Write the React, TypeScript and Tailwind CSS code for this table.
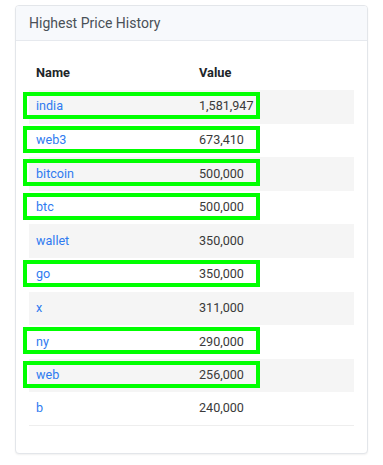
const rows = [
  { name: "india", value: "1,581,947", mark: true },
  { name: "web3", value: "673,410", mark: true },
  { name: "bitcoin", value: "500,000", mark: true },
  { name: "btc", value: "500,000", mark: true },
  { name: "wallet", value: "350,000", mark: false },
  { name: "go", value: "350,000", mark: true },
  { name: "x", value: "311,000", mark: false },
  { name: "ny", value: "290,000", mark: true },
  { name: "web", value: "256,000", mark: true },
  { name: "b", value: "240,000", mark: false },
];

export default function App() {
  return (
    <div className="w-[383px] h-[465px] bg-white pt-[5px] px-[15px]" style={{ fontFamily: "Roboto, 'Liberation Sans', sans-serif" }}>
      <div className="h-[449px] rounded-[4px] border border-[#e3e6ea] bg-white shadow-[0_1px_2px_rgba(0,0,0,0.06)] overflow-hidden">
        <div className="h-[35px] flex items-center px-[13px] bg-[#f7f9fc] border-b border-[#e6e9ee]">
          <h2 className="text-[14px] text-[#495057]">Highest Price History</h2>
        </div>
        <div className="px-[13px] pt-[14px]">
          <div className="h-[35px] flex items-center pl-[7px] text-[12.8px] font-bold text-[#212529]">
            <div className="w-[163px]">Name</div>
            <div>Value</div>
          </div>
          {rows.map((r, i) => (
            <div
              key={r.name}
              className={
                "relative h-[33.6px] flex items-center pl-[7px] text-[12.6px] " +
                (i % 2 === 0 ? "bg-[#f5f5f5]" : "bg-white") +
                (i === rows.length - 1 ? " border-b border-[#eeeeee]" : "")
              }
            >
              <div className="w-[163px] text-[#2f7bf0]">{r.name}</div>
              <div className="text-[#3a3a3a]">{r.value}</div>
              {r.mark && (
                <div className="absolute left-[-6px] top-[2px] w-[237px] h-[27px] border-4 border-[#00ff00]" />
              )}
            </div>
          ))}
        </div>
      </div>
    </div>
  );
}
